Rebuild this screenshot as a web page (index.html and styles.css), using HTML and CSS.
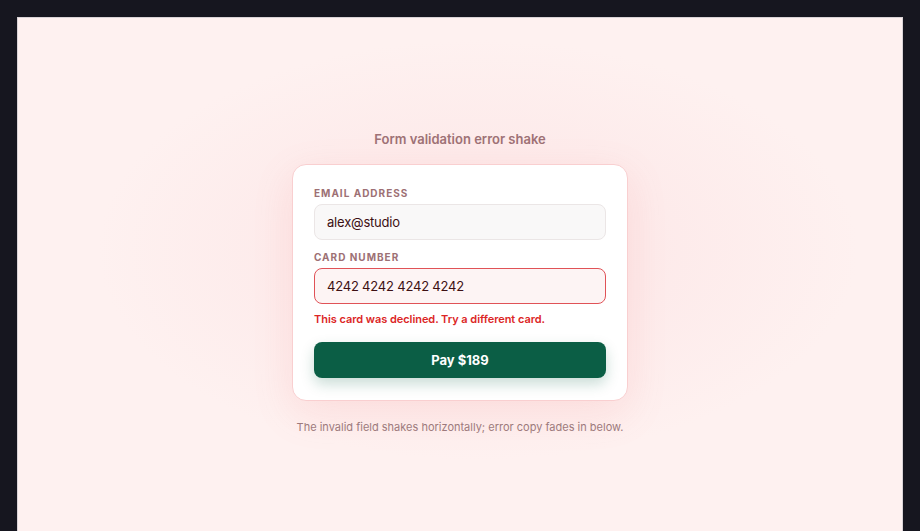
FILE: index.html
```html
<!DOCTYPE html>
<html lang="en">
<head>
<meta charset="utf-8">
<title>Form validation error shake</title>
<link rel="stylesheet" href="styles.css">
</head>
<body>
<div class="frame">
  <main class="stage">
    <h1 class="title">Form validation error shake</h1>
    <form class="card">
      <div class="field">
        <label class="label">EMAIL ADDRESS</label>
        <div class="input">alex@studio</div>
      </div>
      <div class="field">
        <label class="label">CARD NUMBER</label>
        <div class="input input-error">4242 4242 4242 4242</div>
        <p class="error">This card was declined. Try a different card.</p>
      </div>
      <div class="btn">Pay $189</div>
    </form>
    <p class="note">The invalid field shakes horizontally; error copy fades in below.</p>
  </main>
</div>
</body>
</html>
```
FILE: styles.css
```css
html, body {
  margin: 0;
  padding: 0;
  height: 100%;
  overflow: hidden;
}
body {
  background: #16161f;
  font-family: Inter, "Noto Sans", sans-serif;
}
.frame {
  padding: 17px 17px 0 17px;
}
.stage {
  height: 531px;
  border: 1px solid #d9d3d6;
  background: radial-gradient(ellipse 380px 210px at 460px 232px, #fde6e6 0%, #fdeaea 45%, #fef1f0 100%);
  display: flex;
  flex-direction: column;
  align-items: center;
  justify-content: center;
  box-sizing: border-box;
}
.title {
  margin: 0 0 17px 0;
  font-size: 13px;
  line-height: 16px;
  font-weight: 600;
  color: #9e7276;
}
.card {
  width: 336px;
  box-sizing: border-box;
  background: #ffffff;
  border: 1px solid #f9cfd0;
  border-radius: 14px;
  padding: 22px 21px 22px 21px;
  box-shadow: 0 12px 40px rgba(240, 110, 110, 0.14);
  display: flex;
  flex-direction: column;
}
.field + .field {
  margin-top: 11px;
}
.label {
  display: block;
  font-size: 10px;
  line-height: 13px;
  font-weight: 700;
  letter-spacing: 0.1em;
  color: #9d7074;
  margin-bottom: 4px;
}
.input {
  height: 36px;
  box-sizing: border-box;
  border: 1px solid #ebe6e6;
  background: #f9f8f8;
  border-radius: 8px;
  padding: 0 12px;
  display: flex;
  align-items: center;
  font-size: 13px;
  letter-spacing: -0.2px;
  color: #3d1013;
}
.input-error {
  border-color: #e05257;
  background: #fdf4f4;
}
.error {
  margin: 7px 0 0 0;
  font-size: 11px;
  line-height: 16px;
  font-weight: 600;
  letter-spacing: -0.05px;
  color: #dc2626;
}
.btn {
  margin-top: 15px;
  height: 36px;
  border-radius: 8px;
  background: #0b5e45;
  color: #ffffff;
  font-size: 13px;
  font-weight: 700;
  display: flex;
  align-items: center;
  justify-content: center;
  box-shadow: 0 6px 14px rgba(11, 94, 69, 0.22);
}
.note {
  margin: 19px 0 0 0;
  font-size: 11px;
  line-height: 14px;
  color: #9d7a7c;
}
```
